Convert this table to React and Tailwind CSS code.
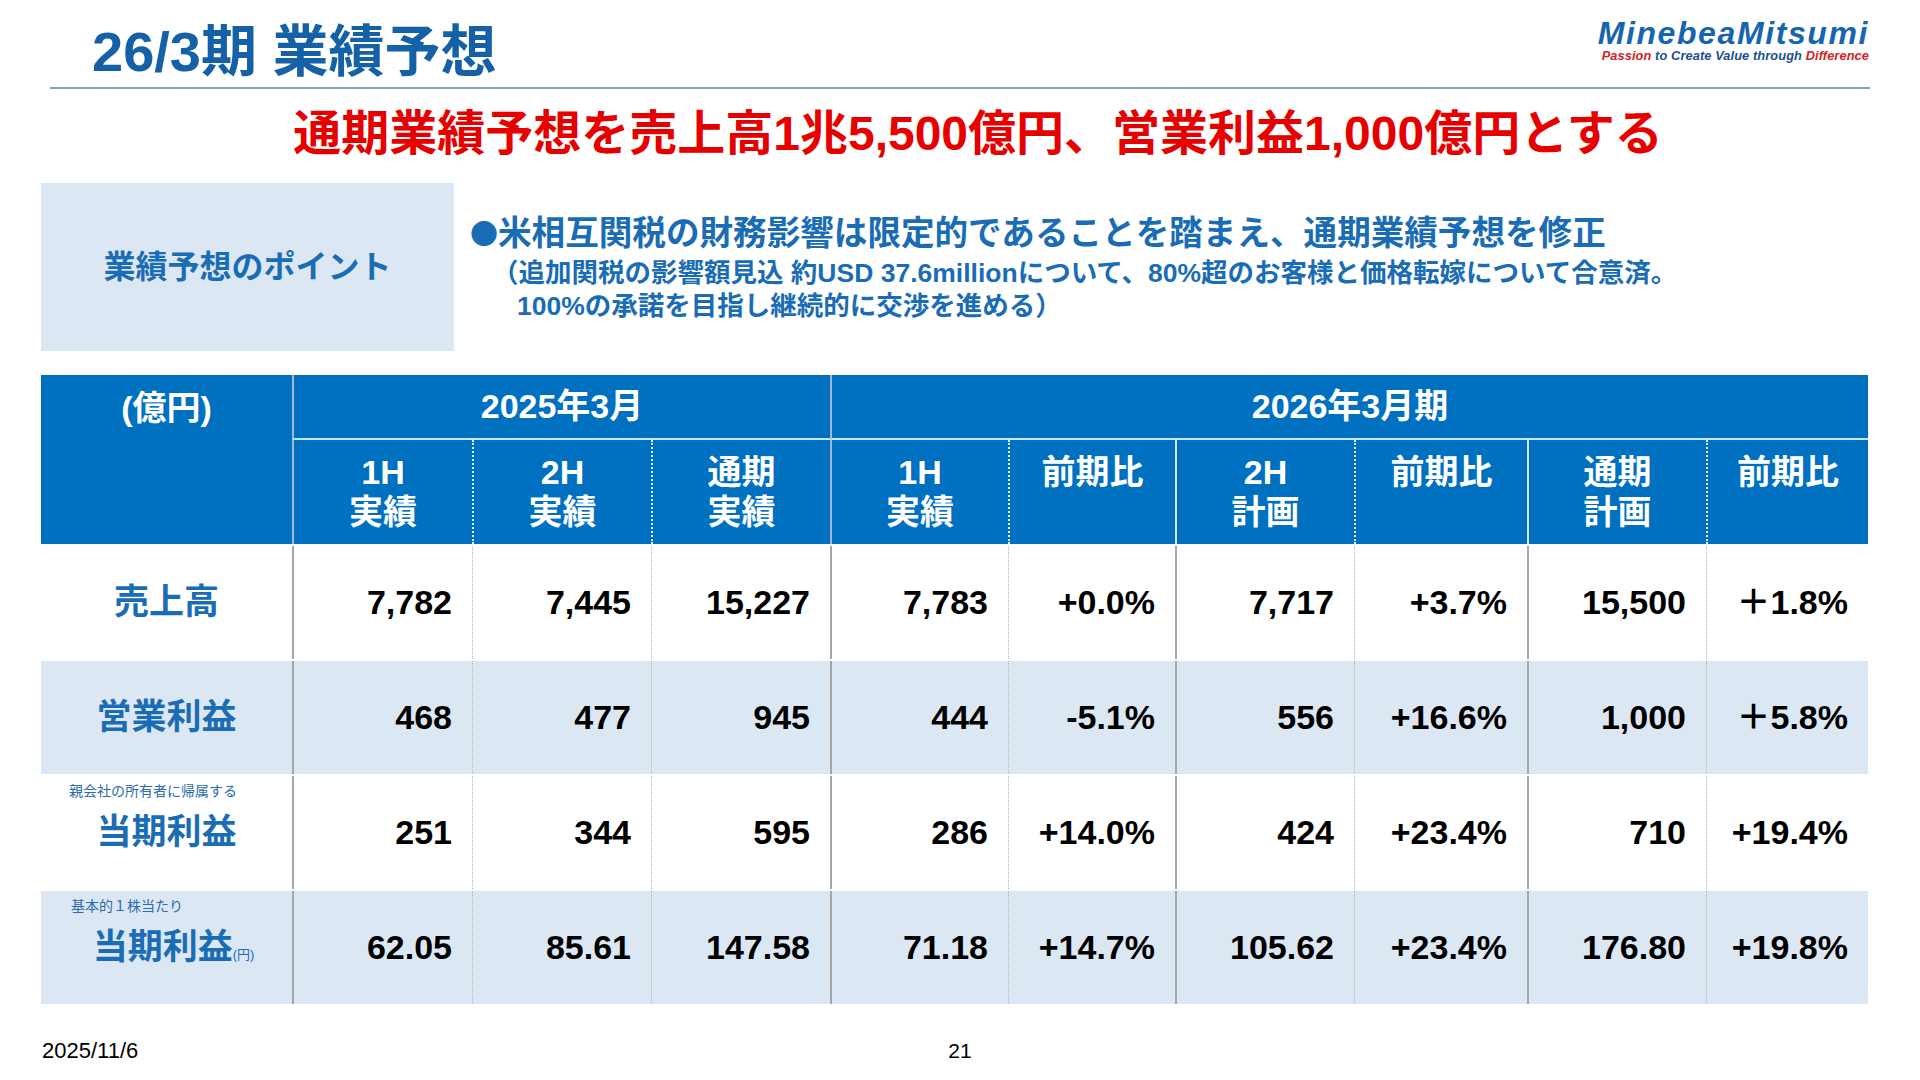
import React from "react";

const COLS =
  "grid grid-cols-[251px_180px_179px_179px_178px_167px_179px_173px_179px_162px]";

const SEP = [null, "solidA", "dot", "dot", "solidA", "dot", "solidB", "dot", "solidB", "dot"];

function dataSep(kind) {
  if (kind === "solidA" || kind === "solidB") return "border-l-2 border-[#a6a6a6]";
  return "border-l border-dotted border-[#b4b4b4]";
}

function headSep(kind) {
  if (kind === "solidA") return "border-l-2 border-[#9fb8d2]";
  if (kind === "solidB") return "border-l-2 border-[#cfe9f8]";
  return "border-l-2 border-dotted border-[#e6f4fc]";
}

const rows = [
  {
    label: "売上高",
    values: ["7,782", "7,445", "15,227", "7,783", "+0.0%", "7,717", "+3.7%", "15,500", "＋1.8%"],
    alt: false,
  },
  {
    label: "営業利益",
    values: ["468", "477", "945", "444", "-5.1%", "556", "+16.6%", "1,000", "＋5.8%"],
    alt: true,
  },
  {
    label: "当期利益",
    sub: "親会社の所有者に帰属する",
    values: ["251", "344", "595", "286", "+14.0%", "424", "+23.4%", "710", "+19.4%"],
    alt: false,
  },
  {
    label: "当期利益",
    sub: "基本的１株当たり",
    yen: true,
    values: ["62.05", "85.61", "147.58", "71.18", "+14.7%", "105.62", "+23.4%", "176.80", "+19.8%"],
    alt: true,
  },
];

const subHeads = [
  ["1H", "実績"],
  ["2H", "実績"],
  ["通期", "実績"],
  ["1H", "実績"],
  ["前期比"],
  ["2H", "計画"],
  ["前期比"],
  ["通期", "計画"],
  ["前期比"],
];

function DataRow({ row }) {
  return (
    <div
      className={`${COLS} h-[115px] border-t-2 border-white ${
        row.alt ? "bg-[#dce7f4]" : "bg-white"
      }`}
    >
      <div className="relative flex items-center justify-center">
        {row.sub && (
          <div
            className={`absolute top-[7px] text-[14px] leading-[16px] text-[#2a6aae] ${
              row.yen ? "left-[30px]" : "left-[28px]"
            }`}
          >
            {row.sub}
          </div>
        )}
        <div
          className={`flex items-baseline text-[35px] font-bold text-[#1a6db5] ${
            row.yen ? "pl-[14px]" : ""
          }`}
        >
          <span>{row.label}</span>
          {row.yen && <span className="text-[13px] font-normal">(円)</span>}
        </div>
      </div>
      {row.values.map((v, i) => (
        <div
          key={i}
          className={`flex items-center justify-end pr-[20px] text-[34px] font-bold text-black ${dataSep(
            SEP[i + 1]
          )}`}
        >
          {v}
        </div>
      ))}
    </div>
  );
}

export default function App() {
  return (
    <div className="w-[1920px] h-[1080px] bg-white overflow-hidden font-['Liberation_Sans','Noto_Sans_CJK_JP',sans-serif]">
      {/* header */}
      <div className="flex justify-between h-[87px] pl-[92px] pr-[51px]">
        <div className="pt-[24px] text-[56px] leading-none font-bold text-[#1461a8] whitespace-nowrap">
          26/3期 業績予想
        </div>
        <div className="pt-[17px] flex flex-col items-end italic font-bold">
          <div className="text-[32px] leading-none tracking-[1.6px] text-[#1766ad]">
            MinebeaMitsumi
          </div>
          <div className="mt-[1px] text-[12.8px] leading-none tracking-[0.1px] text-[#1d4e8f]">
            <span className="text-[#d2232a]">Passion</span> to Create Value through{" "}
            <span className="text-[#d2232a]">Difference</span>
          </div>
        </div>
      </div>
      <div className="mx-[50px] h-[2px] bg-[#84a3b5]" />

      {/* headline */}
      <div className="mt-[21px] pl-[36px] text-center text-[48px] leading-none font-bold text-[#e60000] whitespace-nowrap">
        通期業績予想を売上高1兆5,500億円、営業利益1,000億円とする
      </div>

      {/* points */}
      <div className="mt-[25px] flex">
        <div className="ml-[41px] w-[413px] h-[168px] bg-[#dce7f4] flex items-center justify-center text-[32px] font-bold text-[#1a6db5]">
          業績予想のポイント
        </div>
        <div className="ml-[16px] pt-[30px] flex flex-col text-[#1a6db5] font-bold">
          <div className="text-[33.6px] leading-[40px] whitespace-nowrap">
            <span className="font-['Noto_Sans_CJK_JP',sans-serif] text-[28px]">●</span>
            米相互関税の財務影響は限定的であることを踏まえ、通期業績予想を修正
          </div>
          <div className="mt-[3px] pl-[22px] text-[26.5px] leading-[33px] whitespace-nowrap">
            （追加関税の影響額見込 約USD 37.6millionについて、80%超のお客様と価格転嫁について合意済。
          </div>
          <div className="pl-[47px] text-[26.5px] leading-[33px] whitespace-nowrap">
            100%の承諾を目指し継続的に交渉を進める）
          </div>
        </div>
      </div>

      {/* table */}
      <div className="mt-[24px] ml-[41px] w-[1827px]">
        <div className={`${COLS} grid-rows-[65px_104px] bg-[#0070c0] text-white font-bold text-[34px]`}>
          <div className="row-span-2 flex justify-center pt-[13px] leading-[40px]">(億円)</div>
          <div className="col-span-3 flex items-center justify-center border-l-2 border-l-[#9fb8d2] border-b-2 border-b-[#c4e6f8]">
            2025年3月
          </div>
          <div className="col-span-6 flex items-center justify-center border-l-2 border-l-[#9fb8d2] border-b-2 border-b-[#c4e6f8]">
            2026年3月期
          </div>
          {subHeads.map((lines, i) => (
            <div
              key={i}
              className={`flex flex-col items-center pt-[12px] leading-[40px] ${headSep(SEP[i + 1])}`}
            >
              {lines.map((l, j) => (
                <span key={j}>{l}</span>
              ))}
            </div>
          ))}
        </div>
        {rows.map((r, i) => (
          <DataRow key={i} row={r} />
        ))}
      </div>

      {/* footer */}
      <div className="grid grid-cols-[1fr_auto_1fr] px-[42px] pt-[36px] text-[21px] leading-none text-black">
        <div className="text-[22px]">2025/11/6</div>
        <div>21</div>
        <div />
      </div>
    </div>
  );
}
